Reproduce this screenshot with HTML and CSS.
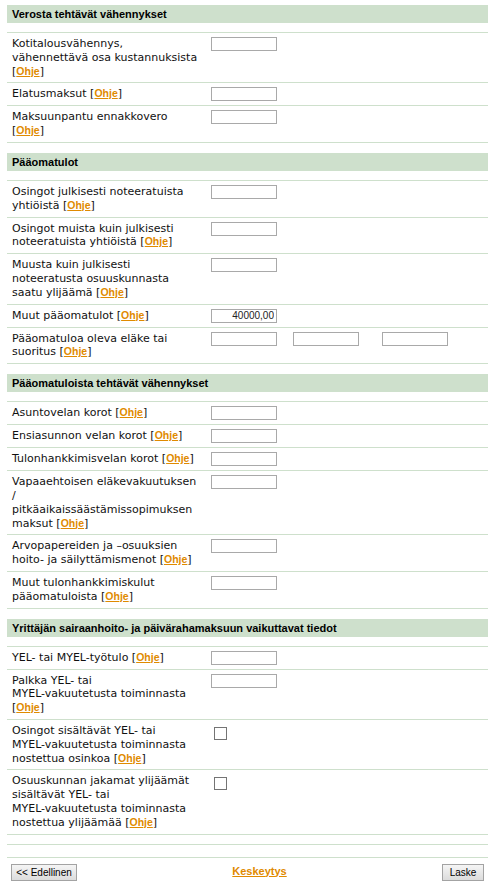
FILE: index.html
```html
<!DOCTYPE html>
<html lang="fi">
<head>
<meta charset="utf-8">
<title>Laskuri</title>
<link rel="stylesheet" href="styles.css">
</head>
<body>
<form class="page">
  <section class="group">
    <h2 class="group-title">Verosta tehtävät vähennykset</h2>
    <div class="rows">
      <div class="row"><div class="label">Kotitalousvähennys,<br>vähennettävä osa kustannuksista<br>[<a href="#" class="help">Ohje</a>]</div><div class="ctrl"><input class="field" type="text"></div></div>
      <div class="row"><div class="label">Elatusmaksut [<a href="#" class="help">Ohje</a>]</div><div class="ctrl"><input class="field" type="text"></div></div>
      <div class="row"><div class="label">Maksuunpantu ennakkovero<br>[<a href="#" class="help">Ohje</a>]</div><div class="ctrl"><input class="field" type="text"></div></div>
    </div>
  </section>

  <section class="group">
    <h2 class="group-title">Pääomatulot</h2>
    <div class="rows">
      <div class="row"><div class="label">Osingot julkisesti noteeratuista<br>yhtiöistä [<a href="#" class="help">Ohje</a>]</div><div class="ctrl"><input class="field" type="text"></div></div>
      <div class="row"><div class="label">Osingot muista kuin julkisesti<br>noteeratuista yhtiöistä [<a href="#" class="help">Ohje</a>]</div><div class="ctrl"><input class="field" type="text"></div></div>
      <div class="row"><div class="label">Muusta kuin julkisesti<br>noteeratusta osuuskunnasta<br>saatu ylijäämä [<a href="#" class="help">Ohje</a>]</div><div class="ctrl"><input class="field" type="text"></div></div>
      <div class="row"><div class="label">Muut pääomatulot [<a href="#" class="help">Ohje</a>]</div><div class="ctrl"><input class="field field-num" type="text" value="40000,00"></div></div>
      <div class="row"><div class="label">Pääomatuloa oleva eläke tai<br>suoritus [<a href="#" class="help">Ohje</a>]</div><div class="ctrl triple"><input class="field" type="text"><input class="field" type="text"><input class="field" type="text"></div></div>
    </div>
  </section>

  <section class="group">
    <h2 class="group-title">Pääomatuloista tehtävät vähennykset</h2>
    <div class="rows">
      <div class="row"><div class="label">Asuntovelan korot [<a href="#" class="help">Ohje</a>]</div><div class="ctrl"><input class="field" type="text"></div></div>
      <div class="row"><div class="label">Ensiasunnon velan korot [<a href="#" class="help">Ohje</a>]</div><div class="ctrl"><input class="field" type="text"></div></div>
      <div class="row"><div class="label">Tulonhankkimisvelan korot [<a href="#" class="help">Ohje</a>]</div><div class="ctrl"><input class="field" type="text"></div></div>
      <div class="row"><div class="label">Vapaaehtoisen eläkevakuutuksen<br>/<br>pitkäaikaissäästämissopimuksen<br>maksut [<a href="#" class="help">Ohje</a>]</div><div class="ctrl"><input class="field" type="text"></div></div>
      <div class="row"><div class="label">Arvopapereiden ja –osuuksien<br>hoito- ja säilyttämismenot [<a href="#" class="help">Ohje</a>]</div><div class="ctrl"><input class="field" type="text"></div></div>
      <div class="row"><div class="label">Muut tulonhankkimiskulut<br>pääomatuloista [<a href="#" class="help">Ohje</a>]</div><div class="ctrl"><input class="field" type="text"></div></div>
    </div>
  </section>

  <section class="group">
    <h2 class="group-title">Yrittäjän sairaanhoito- ja päivärahamaksuun vaikuttavat tiedot</h2>
    <div class="rows">
      <div class="row"><div class="label">YEL- tai MYEL-työtulo [<a href="#" class="help">Ohje</a>]</div><div class="ctrl"><input class="field" type="text"></div></div>
      <div class="row"><div class="label">Palkka YEL- tai<br>MYEL-vakuutetusta toiminnasta<br>[<a href="#" class="help">Ohje</a>]</div><div class="ctrl"><input class="field" type="text"></div></div>
      <div class="row"><div class="label">Osingot sisältävät YEL- tai<br>MYEL-vakuutetusta toiminnasta<br>nostettua osinkoa [<a href="#" class="help">Ohje</a>]</div><div class="ctrl"><input class="check" type="checkbox"></div></div>
      <div class="row"><div class="label">Osuuskunnan jakamat ylijäämät<br>sisältävät YEL- tai<br>MYEL-vakuutetusta toiminnasta<br>nostettua ylijäämää [<a href="#" class="help">Ohje</a>]</div><div class="ctrl"><input class="check" type="checkbox"></div></div>
    </div>
  </section>

  <div class="rule rule-a"></div>
  <div class="rule rule-b"></div>

  <div class="actions">
    <button type="button" class="btn btn-prev">&lt;&lt; Edellinen</button>
    <a href="#" class="cancel">Keskeytys</a>
    <button type="button" class="btn btn-calc">Laske</button>
  </div>
</form>
</body>
</html>
```

FILE: styles.css
```css
html, body {
  margin: 0;
  padding: 0;
  background: #ffffff;
}

.page {
  width: 481px;
  margin: 0 0 0 7px;
  padding-top: 5px;
  font-family: "DejaVu Sans", Verdana, sans-serif;
  font-size: 11px;
  color: #111;
}

.group + .group {
  margin-top: 10px;
}

.group-title {
  margin: 0 0 9px 0;
  height: 18px;
  padding-left: 5px;
  background: #cee0cc;
  font-family: "Liberation Sans", Arial, sans-serif;
  font-size: 11px;
  font-weight: bold;
  line-height: 18px;
  color: #000;
}

.rows {
  border-bottom: 1px solid #cee0cc;
}

.row {
  display: grid;
  grid-template-columns: 204px 1fr;
  align-items: start;
  padding: 4px 0;
  border-top: 1px solid #cee0cc;
}

.label {
  padding-left: 5px;
  line-height: 13.8px;
  white-space: nowrap;
}

.help {
  font-family: "Liberation Sans", Arial, sans-serif;
  font-size: 10.5px;
  font-weight: bold;
  color: #e08a00;
  text-decoration: underline;
}

.ctrl {
  display: flex;
  align-items: flex-start;
}

.field {
  display: block;
  box-sizing: border-box;
  width: 66px;
  height: 14px;
  margin: 0;
  padding: 0 2px;
  border: 1px solid #a9a9a9;
  border-radius: 0;
  background: #fff;
  font-family: "Liberation Sans", Arial, sans-serif;
  font-size: 10px;
  color: #222;
  outline: none;
}

.field-num {
  text-align: right;
}

.triple {
  display: grid;
  grid-template-columns: 82px 89px 66px;
}

.check {
  appearance: none;
  -webkit-appearance: none;
  box-sizing: border-box;
  width: 13px;
  height: 13px;
  margin: 3px 0 0 3px;
  border: 1px solid #747474;
  border-radius: 0;
  background: #fff;
}

.rule {
  border-bottom: 1px solid #cee0cc;
}

.rule-a {
  height: 9px;
}

.rule-b {
  height: 12px;
}

.actions {
  display: flex;
  align-items: flex-start;
  padding: 6px 4px 0 4px;
}

.btn {
  box-sizing: border-box;
  height: 17px;
  margin: 0;
  padding: 0;
  border: 1px solid #a3a3a3;
  border-radius: 0;
  background: linear-gradient(#f5f5f5, #dcdcdc);
  font-family: "Liberation Sans", Arial, sans-serif;
  font-size: 10px;
  color: #000;
  line-height: 15px;
}

.btn-prev {
  width: 66px;
}

.btn-calc {
  width: 42px;
}

.cancel {
  margin: 1px auto 0 auto;
  font-family: "Liberation Sans", Arial, sans-serif;
  font-size: 11px;
  font-weight: bold;
  line-height: 12px;
  color: #e08a00;
  text-decoration: underline;
}
```
